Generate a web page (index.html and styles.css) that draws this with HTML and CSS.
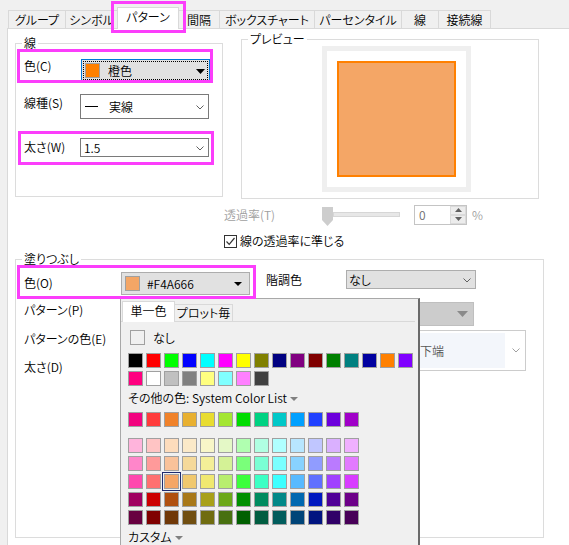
FILE: index.html
```html
<!DOCTYPE html>
<html lang="ja">
<head>
<meta charset="utf-8">
<title>パターン</title>
<link rel="stylesheet" href="styles.css">
</head>
<body>
<div class="tabs">
  <div class="tab t-group">グループ</div>
  <div class="tab t-symbol">シンボル</div>
  <div class="tab tab-on t-pattern">パターン</div>
  <div class="tab t-gap">間隔</div>
  <div class="tab t-box">ボックスチャート</div>
  <div class="tab t-pct">パーセンタイル</div>
  <div class="tab t-line">線</div>
  <div class="tab t-conn">接続線</div>
</div>

<div class="panel">
  <div class="top">
    <div class="group line-group">
      <div class="legend">線</div>
      <div class="rows">
        <div class="row r1">
          <div class="lbl lbl-c">色(C)</div>
          <div class="dd dd-focus">
            <div class="focus-rect">
              <span class="csw csw-orange"></span>
              <span class="dd-text t-orange">橙色</span>
              <svg class="tri tri-c" width="9" height="5" viewBox="0 0 9 5"><polygon points="0,0 9,0 4.5,5" fill="#000"/></svg>
            </div>
          </div>
        </div>
        <div class="row r2">
          <div class="lbl lbl-s">線種(S)</div>
          <div class="dd dd-white dd-tall">
            <span class="dash"></span>
            <span class="dd-text t-solid">実線</span>
            <svg class="chev chev-s" width="8" height="5" viewBox="0 0 8 5"><polyline points="0.5,0.5 4,4 7.5,0.5" fill="none" stroke="#606060"/></svg>
          </div>
        </div>
        <div class="row r3">
          <div class="lbl lbl-w">太さ(W)</div>
          <div class="dd dd-white dd-short">
            <span class="dd-text t-width">1.5</span>
            <svg class="chev chev-s" width="8" height="5" viewBox="0 0 8 5"><polyline points="0.5,0.5 4,4 7.5,0.5" fill="none" stroke="#606060"/></svg>
          </div>
        </div>
      </div>
    </div>

    <div class="rcol">
      <div class="group preview-group">
        <div class="legend">プレビュー</div>
        <div class="pv-frame"><div class="pv-sq"></div></div>
      </div>
      <div class="trans">
        <div class="t-lbl">透過率(T)</div>
        <div class="slider">
          <svg class="thumb" width="11" height="19" viewBox="0 0 11 19"><polygon points="0,0 11,0 11,13 5.5,19 0,13" fill="#cdcdcd"/></svg>
          <div class="track"></div>
        </div>
        <div class="spin">
          <span class="spin-val">0</span>
          <div class="spin-btns">
            <div class="sbtn"><svg width="7" height="4" viewBox="0 0 7 4"><polygon points="0,4 7,4 3.5,0" fill="#606060"/></svg></div>
            <div class="sbtn"><svg width="7" height="4" viewBox="0 0 7 4"><polygon points="0,0 7,0 3.5,4" fill="#606060"/></svg></div>
          </div>
        </div>
        <div class="pct">%</div>
      </div>
      <div class="check-row">
        <span class="cbox"><svg width="11" height="11" viewBox="0 0 11 11"><polyline points="1.5,5.5 4.2,8.3 9.5,2" fill="none" stroke="#333" stroke-width="1.2"/></svg></span>
        <span class="c-text">線の透過率に準じる</span>
      </div>
    </div>
  </div>

  <div class="group fill-group">
    <div class="legend">塗りつぶし</div>
    <div class="fill-body">
      <div class="fcol-l">
        <div class="frow1">
          <div class="lbl lbl-o">色(O)</div>
          <div class="dd dd-gray dd-fill">
            <span class="csw csw-fill"></span>
            <span class="dd-text t-hex">#F4A666</span>
            <svg class="tri tri-o" width="8" height="4" viewBox="0 0 8 4"><polygon points="0,0 8,0 4,4" fill="#000"/></svg>
          </div>
        </div>
        <div class="lbl lbl-p">パターン(P)</div>
        <div class="lbl lbl-e">パターンの色(E)</div>
        <div class="lbl lbl-d">太さ(D)</div>
      </div>
      <div class="fcol-r">
        <div class="grad">
          <div class="lbl lbl-g">階調色</div>
          <div class="dd dd-gray dd-grad">
            <span class="dd-text t-none">なし</span>
            <svg class="chev chev-g" width="8" height="5" viewBox="0 0 8 5"><polyline points="0.5,0.5 4,4 7.5,0.5" fill="none" stroke="#606060"/></svg>
          </div>
        </div>
        <div class="dis-dd">
          <svg class="tri tri-dis" width="11" height="6" viewBox="0 0 11 6"><polygon points="0,0 11,0 5.5,6" fill="#8a8a8a"/></svg>
        </div>
        <div class="edge-box">
          <div class="edge-in">下端</div>
          <svg class="chev chev-e" width="8" height="5" viewBox="0 0 8 5"><polyline points="0.5,0.5 4,4 7.5,0.5" fill="none" stroke="#a0a0a0"/></svg>
        </div>
      </div>
    </div>
  </div>
</div>

<div class="popup">
  <div class="ptabs">
    <div class="ptab ptab-on">単一色</div>
    <div class="ptab ptab-off">プロット毎</div>
  </div>
  <div class="pbody">
    <div class="none-row"><span class="none-box"></span><span class="none-text">なし</span></div>
    <div class="grid grid16">
      <span class="sw" style="--c:#000000"></span><span class="sw" style="--c:#ff0000"></span><span class="sw" style="--c:#00ff00"></span><span class="sw" style="--c:#0000ff"></span><span class="sw" style="--c:#00ffff"></span><span class="sw" style="--c:#ff00ff"></span><span class="sw" style="--c:#ffff00"></span><span class="sw" style="--c:#808000"></span><span class="sw" style="--c:#000080"></span><span class="sw" style="--c:#800080"></span><span class="sw" style="--c:#800000"></span><span class="sw" style="--c:#008000"></span><span class="sw" style="--c:#008080"></span><span class="sw" style="--c:#0000a0"></span><span class="sw" style="--c:#ff8000"></span><span class="sw" style="--c:#8000ff"></span>
      <span class="sw" style="--c:#ff0080"></span><span class="sw" style="--c:#ffffff"></span><span class="sw" style="--c:#c0c0c0"></span><span class="sw" style="--c:#808080"></span><span class="sw" style="--c:#ffff80"></span><span class="sw" style="--c:#80ffff"></span><span class="sw" style="--c:#ff80ff"></span><span class="sw" style="--c:#404040"></span>
    </div>
    <div class="more">その他の色: System Color List<svg class="small-tri" width="8" height="4" viewBox="0 0 8 4"><polygon points="0,0 8,0 4,4" fill="#808080"/></svg></div>
    <div class="grid grid13 g-sys">
      <span class="sw" style="--c:#f2037f"></span><span class="sw" style="--c:#ff3c3c"></span><span class="sw" style="--c:#f0822a"></span><span class="sw" style="--c:#e8b030"></span><span class="sw" style="--c:#e8dc30"></span><span class="sw" style="--c:#a4e632"></span><span class="sw" style="--c:#00dc00"></span><span class="sw" style="--c:#00d282"></span><span class="sw" style="--c:#00c8c8"></span><span class="sw" style="--c:#00a0ff"></span><span class="sw" style="--c:#2040ff"></span><span class="sw" style="--c:#6c00dc"></span><span class="sw" style="--c:#a000c8"></span>
    </div>
    <div class="grid grid13 g-shades">
      <span class="sw" style="--c:#ffb4dc"></span><span class="sw" style="--c:#ffc4c4"></span><span class="sw" style="--c:#fddcbc"></span><span class="sw" style="--c:#fbe9c8"></span><span class="sw" style="--c:#f8f6c8"></span><span class="sw" style="--c:#e4f8c6"></span><span class="sw" style="--c:#b0ffb0"></span><span class="sw" style="--c:#b0ffe2"></span><span class="sw" style="--c:#b0ffff"></span><span class="sw" style="--c:#b8e6ff"></span><span class="sw" style="--c:#c0c6ff"></span><span class="sw" style="--c:#dab0ff"></span><span class="sw" style="--c:#f0b0ff"></span>
      <span class="sw" style="--c:#ff86ca"></span><span class="sw" style="--c:#ff9a9a"></span><span class="sw" style="--c:#f9c29a"></span><span class="sw" style="--c:#f5d99a"></span><span class="sw" style="--c:#f4ef98"></span><span class="sw" style="--c:#d4f296"></span><span class="sw" style="--c:#7aff7a"></span><span class="sw" style="--c:#7affd4"></span><span class="sw" style="--c:#7affff"></span><span class="sw" style="--c:#88d2ff"></span><span class="sw" style="--c:#909cff"></span><span class="sw" style="--c:#ba7aff"></span><span class="sw" style="--c:#e27aff"></span>
      <span class="sw" style="--c:#ff48ae"></span><span class="sw" style="--c:#ff7070"></span><span class="sw sw-sel" style="--c:#f4a666"></span><span class="sw" style="--c:#f0c86e"></span><span class="sw" style="--c:#f0e870"></span><span class="sw" style="--c:#b8ee6e"></span><span class="sw" style="--c:#3cff3c"></span><span class="sw" style="--c:#3cffc4"></span><span class="sw" style="--c:#3cffff"></span><span class="sw" style="--c:#58baff"></span><span class="sw" style="--c:#6070ff"></span><span class="sw" style="--c:#a040ff"></span><span class="sw" style="--c:#d83cff"></span>
      <span class="sw" style="--c:#a00060"></span><span class="sw" style="--c:#cc0000"></span><span class="sw" style="--c:#b05010"></span><span class="sw" style="--c:#a87818"></span><span class="sw" style="--c:#a8a018"></span><span class="sw" style="--c:#6ca818"></span><span class="sw" style="--c:#009000"></span><span class="sw" style="--c:#008c60"></span><span class="sw" style="--c:#008888"></span><span class="sw" style="--c:#0068b0"></span><span class="sw" style="--c:#0018c0"></span><span class="sw" style="--c:#500098"></span><span class="sw" style="--c:#6c0088"></span>
      <span class="sw" style="--c:#680040"></span><span class="sw" style="--c:#800000"></span><span class="sw" style="--c:#703808"></span><span class="sw" style="--c:#704e10"></span><span class="sw" style="--c:#706c10"></span><span class="sw" style="--c:#487010"></span><span class="sw" style="--c:#006000"></span><span class="sw" style="--c:#005c40"></span><span class="sw" style="--c:#005c5c"></span><span class="sw" style="--c:#004478"></span><span class="sw" style="--c:#001480"></span><span class="sw" style="--c:#300068"></span><span class="sw" style="--c:#480058"></span>
    </div>
    <div class="more custom">カスタム<svg class="small-tri" width="8" height="4" viewBox="0 0 8 4"><polygon points="0,0 8,0 4,4" fill="#808080"/></svg></div>
  </div>
</div>

<div class="hl hl-tab"></div>
<div class="hl hl-c"></div>
<div class="hl hl-w"></div>
<div class="hl hl-o"></div>
</body>
</html>
```

FILE: styles.css
```css
* { box-sizing: border-box; }
html, body { margin: 0; padding: 0; }
body {
  position: relative;
  width: 569px;
  height: 545px;
  overflow: hidden;
  background: #f0f0f0;
  color: #000;
  font-family: "Noto Sans CJK JP", "Noto Sans", sans-serif;
  font-size: 12px;
  font-weight: 350;
  line-height: 16px;
  font-feature-settings: "palt";
}

/* ---------- tabs ---------- */
.tabs {
  display: flex;
  align-items: flex-end;
  height: 28px;
  padding-left: 8px;
}
.tab {
  height: 18px;
  line-height: 17px;
  text-align: center;
  white-space: nowrap;
  border: 1px solid #d9d9d9;
  border-bottom: none;
  background: #f0f0f0;
  margin-left: -1px;
}
.tab:first-child { margin-left: 0; }
.tab-on {
  position: relative;
  z-index: 1;
  height: 22px;
  margin-bottom: -1px;
  padding-bottom: 3px;
  background: #fff;
}
.t-group { width: 58px; }
.t-symbol { width: 53px; }
.t-pattern { width: 62px; }
.t-gap { width: 42px; }
.t-box { width: 96px; }
.t-pct { width: 88px; }
.t-line { width: 38px; }
.t-conn { width: 53px; }

/* ---------- panel ---------- */
.panel {
  height: 517px;
  margin-left: 7px;
  background: #fff;
  border-left: 1px solid #d9d9d9;
  border-top: 1px solid #d9d9d9;
}
.top {
  display: grid;
  grid-template-columns: 208px 1fr;
  align-items: start;
  padding-left: 7px;
}
.group { border: 1px solid #dcdcdc; }
.legend {
  width: fit-content;
  height: 16px;
  margin: -9px 0 0 6px;
  padding: 0 2px;
  background: #fff;
  line-height: 16px;
}

/* line group */
.line-group { margin-top: 14px; height: 154px; }
.rows { padding: 8px 0 0 8px; }
.row { display: flex; align-items: flex-start; }
.r1 { height: 23px; }
.r2 { height: 25px; margin-top: 12px; }
.r3 { height: 19px; margin-top: 19px; }
.lbl { line-height: 16px; white-space: nowrap; }
.lbl-c { width: 57px; margin-top: -1px; }
.lbl-s { width: 56px; margin-top: 1px; }
.lbl-w { width: 56px; margin-top: 1px; }

.dd {
  display: flex;
  align-items: center;
  width: 129px;
}
.dd-text { flex: 1; white-space: nowrap; }
.dd-focus {
  height: 23px;
  border: 1px solid #0078d7;
  background: #e1e1e1;
}
.focus-rect {
  flex: 1;
  align-self: stretch;
  display: flex;
  align-items: center;
  margin: 1px;
  border: 1px dotted #000;
}
.csw {
  flex: none;
  width: 15px;
  height: 15px;
  border: 1px solid #a0a0a0;
}
.csw-orange { margin-left: 1px; background: #ff8000; }
.t-orange { margin-left: 8px; }
.tri { flex: none; }
.tri-c { margin-right: 2px; margin-top: 2px; }

.dd-white { background: #fff; border: 1px solid #7a7a7a; }
.dd-tall { height: 25px; }
.dd-short { height: 19px; }
.dash {
  flex: none;
  width: 13px;
  height: 1px;
  margin-left: 4px;
  background: #000;
}
.t-solid { margin-left: 11px; }
.t-width { padding-left: 3px; }
.chev { flex: none; }
.chev-s { margin-right: 4px; margin-top: 2px; }

/* preview */
.rcol { padding-left: 18px; }
.preview-group { margin-top: 10px; width: 298px; height: 160px; }
.pv-frame {
  width: 149px;
  height: 146px;
  margin: -1px 0 0 80px;
  border: 5px solid #efefef;
  padding: 10px;
  background: #fff;
}
.pv-sq {
  width: 119px;
  height: 116px;
  border: 2px solid #ff8000;
  background: #f4a666;
}
.trans {
  display: flex;
  align-items: center;
  height: 21px;
  margin: 5px 0 0 -17px;
}
.t-lbl { width: 98px; color: #a0a0a0; }
.slider { display: flex; align-items: center; width: 78px; height: 21px; }
.thumb { flex: none; margin-top: 3px; }
.track {
  width: 67px;
  height: 5px;
  background: #e7e7e7;
  border: 1px solid #d6d6d6;
  margin-top: -1px;
}
.spin {
  display: flex;
  width: 53px;
  height: 20px;
  margin-left: 14px;
  border: 1px solid #c4c4c4;
  background: #fff;
}
.spin-val { flex: 1; padding-left: 4px; line-height: 18px; color: #6d6d6d; }
.spin-btns { display: flex; flex-direction: column; width: 16px; }
.sbtn {
  flex: 1;
  display: flex;
  align-items: center;
  justify-content: center;
  background: #ececec;
  border: 1px solid #dadada;
}
.pct { margin-left: 5px; color: #a0a0a0; }
.check-row {
  display: flex;
  align-items: center;
  height: 16px;
  margin: 8px 0 0 -17px;
}
.cbox {
  display: flex;
  align-items: center;
  justify-content: center;
  width: 13px;
  height: 13px;
  border: 1px solid #333;
  background: #fff;
}
.c-text { margin-left: 3px; }

/* fill group */
.fill-group {
  width: 529px;
  height: 279px;
  margin: 10px 0 0 7px;
}
.fill-body {
  display: flex;
  align-items: flex-start;
  padding: 3px 0 0 8px;
}
.fcol-l { width: 242px; }
.frow1 { display: flex; align-items: flex-start; height: 26px; }
.lbl-o { width: 97px; margin-top: 5px; }
.dd-gray { background: #e1e1e1; border: 1px solid #adadad; }
.dd-fill { height: 23px; margin-top: 2px; }
.csw-fill { margin-left: 3px; background: #f4a666; }
.t-hex { margin-left: 7px; }
.tri-o { margin-right: 7px; margin-top: 1px; }
.lbl-p { margin-top: 6px; }
.lbl-e { margin-top: 13px; }
.lbl-d { margin-top: 12px; }

.grad { display: flex; height: 19px; }
.lbl-g { width: 80px; line-height: 19px; }
.dd-grad { width: 130px; height: 19px; }
.t-none { padding-left: 2px; }
.chev-g { margin-right: 4px; margin-top: 1px; }
.dis-dd {
  display: flex;
  align-items: center;
  justify-content: flex-end;
  width: 128px;
  height: 24px;
  margin: 13px 0 0 80px;
  background: #cccccc;
  border: 1px solid #bfbfbf;
}
.tri-dis { margin-right: 5px; }
.edge-box {
  display: flex;
  align-items: center;
  width: 180px;
  height: 41px;
  margin: 4px 0 0 80px;
  border: 1px solid #cccccc;
  background: #fff;
}
.edge-in {
  width: 156px;
  height: 35px;
  margin-left: 2px;
  padding-left: 71px;
  line-height: 35px;
  background: #f3f6fb;
  color: #555;
}
.chev-e { margin-left: 7px; }

/* ---------- popup ---------- */
.popup {
  position: absolute;
  left: 120px;
  top: 298px;
  width: 300px;
  height: 247px;
  background: #f0f0f0;
  border: 1px solid #a8a8a8;
  border-right: 2px solid #6a6a6a;
  border-bottom: none;
}
.ptabs {
  display: flex;
  align-items: flex-end;
  height: 23px;
  margin-right: 3px;
  padding-left: 1px;
  border-bottom: 1px solid #d9d9d9;
}
.ptab {
  height: 17px;
  line-height: 16px;
  text-align: center;
  white-space: nowrap;
  border: 1px solid #d9d9d9;
  border-bottom: none;
}
.ptab-on {
  position: relative;
  z-index: 1;
  width: 53px;
  height: 21px;
  margin-bottom: -1px;
  padding-bottom: 3px;
  line-height: 17px;
  background: #fff;
}
.ptab-off { width: 59px; margin-left: -1px; background: #f0f0f0; }
.pbody { padding-left: 7px; }
.none-row {
  display: flex;
  align-items: center;
  height: 15px;
  margin: 8px 0 0 2px;
}
.none-box {
  width: 15px;
  height: 15px;
  border: 1px solid #a0a0a0;
}
.none-text { margin-left: 8px; }
.grid { display: grid; gap: 3px; }
.grid16 { grid-template-columns: repeat(16, 15px); margin-top: 8px; }
.grid13 { grid-template-columns: repeat(13, 15px); }
.sw {
  display: block;
  width: 15px;
  height: 15px;
  border: 1px solid #a0a0a0;
  background: var(--c);
}
.sw-sel { outline: 1px solid #1c2a6e; outline-offset: 1px; }
.more {
  display: flex;
  align-items: center;
  height: 16px;
  margin-top: 4px;
  white-space: nowrap;
}
.small-tri { margin-left: 3px; margin-top: 2px; }
.g-sys { margin-top: 6px; }
.g-shades { margin-top: 11px; }
.custom { margin-top: 4px; }

/* ---------- annotation highlights ---------- */
.hl {
  position: absolute;
  border: 3px solid #fb3efb;
  pointer-events: none;
}
.hl-tab { left: 111px; top: 1px; width: 75px; height: 32px; }
.hl-c { left: 17px; top: 49px; width: 196px; height: 34px; }
.hl-w { left: 18px; top: 131px; width: 196px; height: 34px; }
.hl-o { left: 17px; top: 265px; width: 239px; height: 34px; }
```
